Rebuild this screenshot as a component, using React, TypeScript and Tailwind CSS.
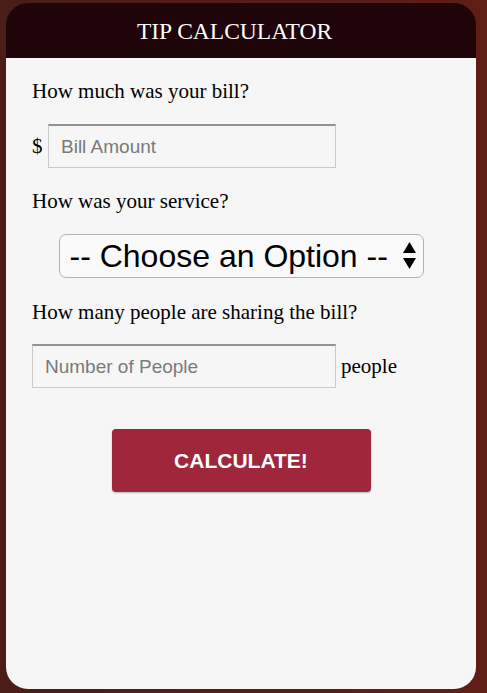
import { useState } from 'react';

const serif = "font-['Liberation_Serif','Times_New_Roman',serif]";
const sans = "font-['Liberation_Sans',Arial,sans-serif]";

export default function App() {
  const [bill, setBill] = useState('');
  const [service, setService] = useState('');
  const [people, setPeople] = useState('');

  return (
    <div className="min-h-screen w-full bg-linear-to-r from-[#4a1d16] to-[#5f1e15] pt-[3px] pb-[4px] px-[6px] flex">
      <div className="w-[470px] min-h-[686px] flex flex-col">
        {/* Header */}
        <header className="h-[55px] bg-[#1f0509] rounded-t-[22px] flex items-center justify-center pt-[1px] pr-[13px]">
          <h1 className={`${serif} text-white text-[23.5px] leading-[26px]`}>TIP CALCULATOR</h1>
        </header>

        {/* Body */}
        <main className="flex-1 bg-[#f6f6f6] rounded-b-[22px] px-[26px] pt-[21px] flex flex-col">
          <p className={`${serif} text-[21px] leading-[24px] text-black`}>How much was your bill?</p>
          <div className="mt-[21px] flex items-center">
            <span className={`${serif} text-[21px] leading-[24px] text-black w-[16px]`}>$</span>
            <input
              value={bill}
              onChange={e => setBill(e.target.value)}
              placeholder="Bill Amount"
              className={`${sans} w-[288px] h-[44px] px-[12px] text-[19px] bg-transparent border border-[#cacaca] border-t-[2px] border-t-[#929292] outline-none placeholder:text-[#7a7a7a]`}
            />
          </div>

          <p className={`${serif} mt-[21px] text-[21px] leading-[24px] text-black`}>How was your service?</p>
          <div className="mt-[21px] flex justify-center">
            <div className="relative w-[365px] h-[44px]">
              <select
                value={service}
                onChange={e => setService(e.target.value)}
                className={`${sans} appearance-none w-full h-full pl-[10px] pr-[30px] text-[32px] leading-[40px] text-black bg-[#f9f9f9] border border-[#b3b3b3] rounded-[7px] outline-none`}
              >
                <option value="" disabled>-- Choose an Option --</option>
                <option value="0.3">30% - Outstanding</option>
                <option value="0.2">20% - Good</option>
                <option value="0.15">15% - It was OK</option>
                <option value="0.1">10% - Bad</option>
                <option value="0.05">5% - Terrible</option>
              </select>
              <svg className="absolute right-[8px] top-[8px] pointer-events-none" width="13" height="27" viewBox="0 0 13 27">
                <path d="M6.5 0 L13 11 L0 11 Z" fill="#000" />
                <path d="M0 16 L13 16 L6.5 27 Z" fill="#000" />
              </svg>
            </div>
          </div>

          <p className={`${serif} mt-[22px] text-[21px] leading-[24px] text-black`}>How many people are sharing the bill?</p>
          <div className="mt-[20px] flex items-center">
            <input
              value={people}
              onChange={e => setPeople(e.target.value)}
              placeholder="Number of People"
              className={`${sans} w-[304px] h-[44px] px-[12px] text-[19px] bg-transparent border border-[#cacaca] border-t-[2px] border-t-[#929292] outline-none placeholder:text-[#7a7a7a]`}
            />
            <span className={`${serif} ml-[5px] text-[21px] leading-[24px] text-black`}>people</span>
          </div>

          <div className="mt-[41px] flex justify-center">
            <button
              type="button"
              className={`${sans} w-[259px] h-[63px] bg-[#a0263b] text-white font-bold text-[21px] rounded-[4px] shadow-[0_1px_2px_rgba(0,0,0,0.25)]`}
            >
              CALCULATE!
            </button>
          </div>
        </main>
      </div>
    </div>
  );
}
